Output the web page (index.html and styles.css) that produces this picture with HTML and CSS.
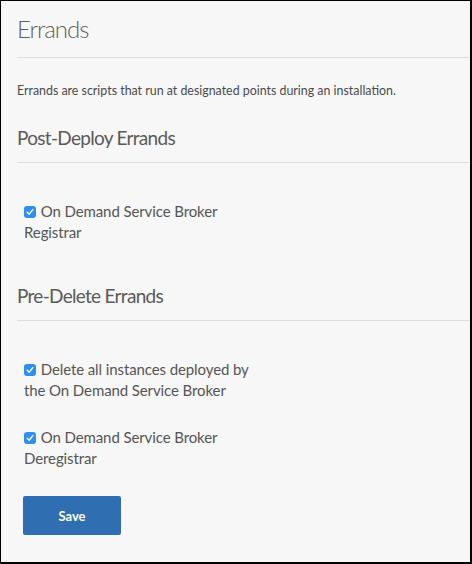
FILE: index.html
```html
<!DOCTYPE html>
<html>
<head>
<meta charset="utf-8">
<link rel="stylesheet" href="styles.css">
</head>
<body>
<div class="page">
  <h1 class="title">Errands</h1>
  <div class="rule"></div>
  <p class="desc">Errands are scripts that run at designated points during an installation.</p>

  <section class="group">
    <h2 class="group-title">Post-Deploy Errands</h2>
    <div class="rule"></div>
    <div class="items">
      <div class="item"><span class="check"><svg viewBox="0 0 12 12" width="12" height="12"><path d="M3.2 6.3 L5.1 8.3 L8.9 3.6" fill="none" stroke="#fff" stroke-width="1.4" stroke-linecap="round" stroke-linejoin="round"/></svg></span> On Demand Service Broker Registrar</div>
    </div>
  </section>

  <section class="group">
    <h2 class="group-title">Pre-Delete Errands</h2>
    <div class="rule"></div>
    <div class="items">
      <div class="item"><span class="check"><svg viewBox="0 0 12 12" width="12" height="12"><path d="M3.2 6.3 L5.1 8.3 L8.9 3.6" fill="none" stroke="#fff" stroke-width="1.4" stroke-linecap="round" stroke-linejoin="round"/></svg></span> Delete all instances deployed by the On Demand Service Broker</div>
      <div class="item"><span class="check"><svg viewBox="0 0 12 12" width="12" height="12"><path d="M3.2 6.3 L5.1 8.3 L8.9 3.6" fill="none" stroke="#fff" stroke-width="1.4" stroke-linecap="round" stroke-linejoin="round"/></svg></span> On Demand Service Broker Deregistrar</div>
    </div>
  </section>

  <button class="save">Save</button>
</div>
</body>
</html>
```
FILE: styles.css
```css
* { box-sizing: border-box; }
html, body { margin: 0; padding: 0; }
body {
  background: #f7f7f7;
  font-family: "Lato", "Liberation Sans", sans-serif;
  color: #5a5a5a;
}
.page {
  width: 472px;
  height: 564px;
  border: 1px solid #000;
  border-right-width: 2px;
  border-bottom-width: 2px;
  padding: 12px 0 0 16px;
  background: #f7f7f7;
}
.title {
  margin: 0;
  font-size: 24px;
  line-height: 32px;
  font-weight: 300;
  letter-spacing: -1px;
  color: #5f5f5f;
}
.rule {
  height: 1px;
  background: #dedede;
}
.title + .rule { margin-top: 12px; }
.desc {
  margin: 24px 0 0;
  font-size: 12.4px;
  line-height: 18px;
  color: #4a4a4a;
}
.group-title {
  margin: 25px 0 0;
  font-size: 19px;
  line-height: 26px;
  font-weight: 400;
  letter-spacing: -0.7px;
  color: #5a5a5a;
}
.group + .group .group-title { margin-top: 40px; }
.group-title + .rule { margin-top: 11px; }
.items {
  display: flex;
  flex-direction: column;
  gap: 26px;
  padding: 38px 0 0 7px;
}
.item {
  width: 232px;
  font-size: 15px;
  line-height: 21px;
  letter-spacing: -0.1px;
  color: #555;
}
.check {
  display: inline-block;
  width: 12px;
  height: 12px;
  border-radius: 3px;
  background: #2f8ef5;
  vertical-align: -1px;
  margin-right: 1px;
}
.check svg { display: block; }
.save {
  display: block;
  margin: 27px 0 0 6px;
  width: 98px;
  height: 39px;
  border: none;
  border-radius: 2px;
  background: #306eb2;
  color: #fff;
  font-family: "Lato", "Liberation Sans", sans-serif;
  font-weight: 700;
  font-size: 13px;
}
```
